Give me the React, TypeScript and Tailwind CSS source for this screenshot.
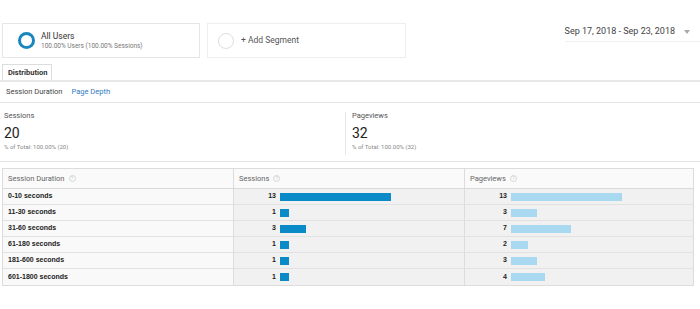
import React from 'react'

type Row = { label: string; sessions: number; pageviews: number }

const ROWS: Row[] = [
  { label: '0-10 seconds', sessions: 13, pageviews: 13 },
  { label: '11-30 seconds', sessions: 1, pageviews: 3 },
  { label: '31-60 seconds', sessions: 3, pageviews: 7 },
  { label: '61-180 seconds', sessions: 1, pageviews: 2 },
  { label: '181-600 seconds', sessions: 1, pageviews: 3 },
  { label: '601-1800 seconds', sessions: 1, pageviews: 4 },
]

const UNIT = 8.55

function Help() {
  return (
    <span className="ml-[4px] inline-flex h-[7px] w-[7px] items-center justify-center rounded-full border border-[#d6d6d6] text-[5px] leading-none text-[#c8c8c8]">
      ?
    </span>
  )
}

function HeadCell({ label, first }: { label: string; first?: boolean }) {
  return (
    <div className={`flex items-center bg-[#fafafa] text-[7.5px] text-[#666] ${first ? 'pl-[5px]' : 'border-l border-[#dcdcdc] pl-[5px]'}`}>
      {label}
      <Help />
    </div>
  )
}

function BarCell({ value, color }: { value: number; color: string }) {
  return (
    <div className="flex items-center border-l border-[#dcdcdc] bg-[#f1f1f1]">
      <span className="w-[42px] text-right font-bold text-[#222]">{value}</span>
      <span className={`ml-[4px] h-[8px] ${color}`} style={{ width: `${value * UNIT}px` }} />
    </div>
  )
}

export default function App() {
  return (
    <div className="h-[309px] w-[700px] overflow-hidden bg-white font-['Roboto',sans-serif] text-[#333]">
      {/* segments + date */}
      <div className="flex h-[64px] items-start pl-[2px] pt-[23px]">
        <div className="flex h-[35px] w-[198px] items-center border border-[#e6e6e6] pl-[15px]">
          <span className="h-[17px] w-[17px] rounded-full border-[3px] border-[#1a86be]" />
          <div className="ml-[6px] flex flex-col leading-none">
            <span className="text-[8.5px] text-[#333]">All Users</span>
            <span className="mt-[2px] text-[6.5px] text-[#777]">100.00% Users (100.00% Sessions)</span>
          </div>
        </div>
        <div className="ml-[7px] flex h-[35px] w-[199px] items-center border border-[#eeeeee] pl-[10px]">
          <span className="h-[16px] w-[16px] rounded-full border-[1.5px] border-[#dedede]" />
          <span className="ml-[7px] text-[8.5px] text-[#555]">+ Add Segment</span>
        </div>
        <div className="ml-auto mt-[2px] flex items-center border-b border-[#f0f0f0] pb-[2px] pr-[10px] text-[9px] text-[#444]">
          Sep 17, 2018 - Sep 23, 2018
          <span className="ml-[9px] h-0 w-0 border-x-[3px] border-t-[4px] border-x-transparent border-t-[#aaa]" />
        </div>
      </div>

      {/* tab */}
      <div className="flex h-[18px] items-end border-b-2 border-[#e8e8e8]">
        <div className="ml-[2px] flex h-[16px] w-[50px] items-center border-x border-t border-[#dddddd] bg-white pl-[5px] text-[7.5px] font-bold text-[#333]">
          Distribution
        </div>
      </div>

      {/* sub tabs */}
      <div className="flex h-[21px] items-center gap-[9px] border-b border-[#e6e6e6] pl-[6px] text-[7.5px]">
        <span className="text-[#444]">Session Duration</span>
        <span className="text-[#2f7bbf]">Page Depth</span>
      </div>

      {/* summary */}
      <div className="flex h-[59px] border-b border-[#e3e3e3] pt-[9px]">
        <div className="flex w-[345px] flex-col pl-[4px] leading-none">
          <span className="text-[7.5px] text-[#555]">Sessions</span>
          <span className="mt-[6px] text-[14px] text-[#222]">20</span>
          <span className="mt-[4px] text-[6px] text-[#888]">% of Total: 100.00% (20)</span>
        </div>
        <div className="mb-[6px] w-px bg-[#e6e6e6]" />
        <div className="flex flex-col pl-[6px] leading-none">
          <span className="text-[7.5px] text-[#555]">Pageviews</span>
          <span className="mt-[6px] text-[14px] text-[#222]">32</span>
          <span className="mt-[4px] text-[6px] text-[#888]">% of Total: 100.00% (32)</span>
        </div>
      </div>

      {/* table */}
      <div className="ml-[2px] mt-[6px] w-[692px] border border-[#dcdcdc] font-['Liberation_Sans',Arial,sans-serif] text-[7px]">
        <div className="grid h-[20px] grid-cols-[230px_231px_1fr] border-b border-[#d9d9d9] font-['Roboto',sans-serif]">
          <HeadCell label="Session Duration" first />
          <HeadCell label="Sessions" />
          <HeadCell label="Pageviews" />
        </div>
        {ROWS.map((r, i) => (
          <div
            key={r.label}
            className={`grid h-[16px] grid-cols-[230px_231px_1fr] ${i < ROWS.length - 1 ? 'border-b border-[#e2e2e2]' : ''}`}
          >
            <div className="flex items-center bg-[#f9f9f9] pl-[5px] font-bold text-[#222]">{r.label}</div>
            <BarCell value={r.sessions} color="bg-[#0a8ac6]" />
            <BarCell value={r.pageviews} color="bg-[#a8d9f0]" />
          </div>
        ))}
      </div>
    </div>
  )
}
